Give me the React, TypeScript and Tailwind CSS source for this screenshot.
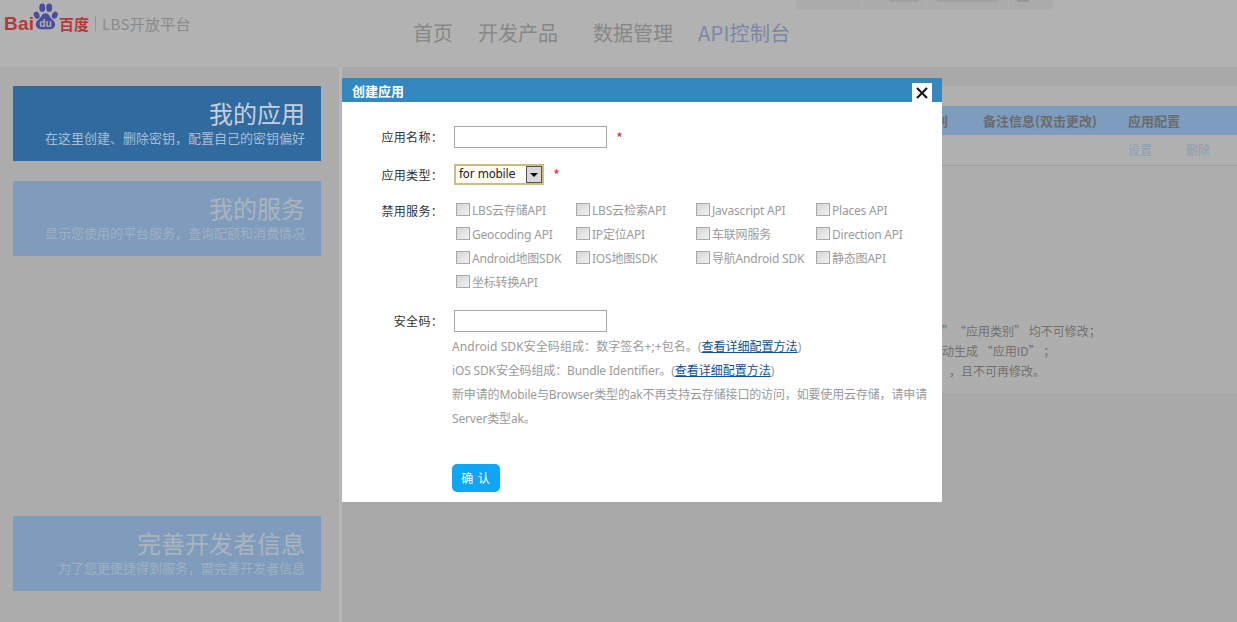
const cjk = "font-['Noto_Sans','Noto_Sans_CJK_SC',sans-serif]";

const services = [
  "LBS云存储API", "LBS云检索API", "Javascript API", "Places API",
  "Geocoding API", "IP定位API", "车联网服务", "Direction API",
  "Android地图SDK", "IOS地图SDK", "导航Android SDK", "静态图API",
  "坐标转换API",
];

function SideCard({ title, sub, active, className = "" }: { title: string; sub: string; active?: boolean; className?: string }) {
  return (
    <div className={`h-[75px] w-[308px] flex flex-col items-end pr-4 pt-[11px] ${active ? "bg-[#316a9f]" : "bg-[#7f9cbc]"} ${className}`}>
      <div className={`text-[24px] leading-[32px] ${active ? "text-[#c6d0dc]" : "text-[#abb4be]"}`}>{title}</div>
      <div className={`text-[13px] leading-[18px] ${active ? "text-[#a9bdd2]" : "text-[#9fb0c3]"}`}>{sub}</div>
    </div>
  );
}

function Logo() {
  return (
    <div className="flex items-center h-[46px] pl-[4px] w-[400px]">
      <span className="w-[28px] text-[#b43a3a] font-bold text-[19px] leading-none font-['Liberation_Sans',sans-serif] tracking-[0.2px]">Bai</span>
      <svg width="27" height="28" viewBox="0 0 29 30" className="mb-[12px] shrink-0" preserveAspectRatio="none">
        <g fill="#4b4ba0">
          <ellipse cx="5" cy="13" rx="3" ry="4" transform="rotate(-20 5 13)" />
          <ellipse cx="11" cy="5" rx="3.200" ry="4.500" />
          <ellipse cx="18.500" cy="5" rx="3.200" ry="4.500" />
          <ellipse cx="24.500" cy="13" rx="3" ry="4" transform="rotate(20 24.500 13)" />
          <path d="M14.500 11c-3.500 0-4.500 4-7 6.500-3 2.500-4 5-3 7.500 1.500 3.500 6 3.500 10 3 4 .5 8.500.5 10-3 1-2.500 0-5-3-7.500-2.500-2.500-3.500-6.500-7-6.500z" />
        </g>
        <text x="14.500" y="26" textAnchor="middle" fontSize="11" fontWeight="700" fill="#b0b0b0" fontFamily="Liberation Sans">du</text>
      </svg>
      <span className="w-[31px] text-[#b43a3a] font-bold text-[15px] leading-none">百度</span>
      <span className="h-[15px] w-px bg-[#949494] ml-[5px] mr-[6px]" />
      <span className="text-[#8a8a8a] text-[15px] leading-none tracking-[0.3px]">LBS开放平台</span>
    </div>
  );
}

function Header() {
  return (
    <header className="relative h-[67px] bg-[#b2b2b2] flex items-start">
      <div className="absolute left-[796px] top-0 h-[10px] w-[257px] bg-[#ababab] flex">
        <span className="w-[66px] border-r border-[#b1b1b1]" />
        <span className="w-[65px] border-r border-[#b1b1b1] pl-[28px]"><span className="block w-[28px] h-[2px] bg-[#a0a0a0]" /></span>
        <span className="w-[82px] border-r border-[#b1b1b1] pl-[10px]"><span className="block w-[60px] h-[2px] bg-[#a0a0a0]" /></span>
        <span className="pl-[8px]"><span className="block w-[12px] h-[2px] bg-[#989898]" /></span>
      </div>
      <div className="w-[413px] shrink-0"><Logo /></div>
      <nav className="flex items-center text-[20px] leading-[28px] text-[#878787] pt-[19px]">
        <span className="mr-[25px]">首页</span>
        <span className="mr-[35px]">开发产品</span>
        <span className="mr-[25px]">数据管理</span>
        <span className="text-[#7b87a5] tracking-[0.3px]">API控制台</span>
      </nav>
    </header>
  );
}

function Main() {
  return (
    <main className="flex-1 min-w-0 flex flex-col h-[555px]">
      <div className="h-[19px] bg-[#a9a9a9] shrink-0" />
      <div className="h-[20px] bg-[#b0b0b0] shrink-0" />
      <div className="h-[29px] bg-[#7e9cbd] shrink-0 flex items-center text-[13px] font-bold text-[#6b6b6b] pl-[551px] whitespace-nowrap">
        <span className="w-[55px] mr-[35px] text-right">应用类别</span>
        <span className="w-[145px]">备注信息(双击更改)</span>
        <span>应用配置</span>
      </div>
      <div className="h-[31px] bg-[#b0b0b0] border-b border-[#9d9d9d] shrink-0 flex items-center text-[12px] text-[#8b9fb6] pl-[786px]">
        <span className="w-[58px]">设置</span>
        <span>删除</span>
      </div>
      <div className="h-[227px] bg-[#aeaeae] shrink-0 pt-[155px] pl-[600px] text-[12px] leading-[20px] text-[#707070] whitespace-nowrap">
        <div><span className="mr-[6px]">”</span>“应用类别” 均不可修改；</div>
        <div>动生成 “应用ID” ；</div>
        <div className="ml-[7px]">，且不可再修改。</div>
      </div>
      <div className="flex-1 bg-[#a8a8a8]" />
    </main>
  );
}

function Modal() {
  return (
    <section className="absolute left-[342px] top-[78px] w-[600px] h-[424px] bg-white flex flex-col">
      <div className="h-[24px] bg-[#3587c0] flex items-center pl-[10px] relative shrink-0">
        <span className="text-white text-[13px] font-bold leading-none">创建应用</span>
        <button className="absolute right-[10px] bottom-0 w-[20px] h-[19px] bg-white flex items-center justify-center">
          <svg width="12" height="12" viewBox="0 0 12 12"><path d="M1 1l10 10M11 1L1 11" stroke="#1a1a1a" strokeWidth="2.200" /></svg>
        </button>
      </div>
      <div className="pt-[24px] text-[12px] text-[#333]">
        <div className="flex items-center h-[22px]">
          <label className="w-[101px] text-right tracking-[0.3px]">应用名称：</label>
          <input className="ml-[11px] w-[153px] h-[22px] border border-[#a5a5a5] bg-white" />
          <span className="ml-[9px] text-[#d8364f] text-[15px] leading-none">*</span>
        </div>
        <div className="flex items-center h-[21px] mt-[16px]">
          <label className="w-[101px] text-right tracking-[0.3px]">应用类型：</label>
          <div className="ml-[11px] w-[90px] h-[21px] border-2 border-[#cdbb84] bg-[#fffdf6] flex items-center justify-between pl-[3px]">
            <span className="text-[11.500px] text-[#222] font-['DejaVu_Sans',sans-serif] tracking-[-0.2px]">for mobile</span>
            <span className="w-[16px] h-[17px] border border-[#555] bg-[#d8d8d8] flex items-center justify-center">
              <span className="w-0 h-0 border-x-[4px] border-x-transparent border-t-[4px] border-t-black" />
            </span>
          </div>
          <span className="ml-[9px] text-[#d8364f] text-[15px] leading-none">*</span>
        </div>
        <div className="flex mt-[14px]">
          <label className="w-[101px] text-right leading-[24px] tracking-[0.3px]">禁用服务：</label>
          <div className="ml-[13px] grid grid-cols-[120px_120px_120px_120px] auto-rows-[24px]">
            {services.map((s) => (
              <div key={s} className={`flex items-center text-[#9b9b9b] whitespace-nowrap tracking-[-0.2px] ${cjk}`}>
                <input type="checkbox" disabled className="appearance-none w-[14px] h-[13px] border border-[#a8a8a8] bg-gradient-to-br from-[#d4d4d4] to-[#f2f2f2] mr-[2px] mb-[3px] shrink-0" />
                <span>{s}</span>
              </div>
            ))}
          </div>
        </div>
        <div className="flex items-center h-[22px] mt-[15px]">
          <label className="w-[101px] text-right tracking-[0.3px]">安全码：</label>
          <input className="ml-[11px] w-[153px] h-[22px] border border-[#a5a5a5] bg-white" />
        </div>
        <div className={`ml-[110px] mt-[3px] w-[480px] leading-[24px] text-[#9a9a9a] ${cjk}`}>
          <div className="tracking-[0.08px]">Android SDK安全码组成：数字签名+;+包名。(<a className="text-[#0b5394] underline tracking-[0px]">查看详细配置方法</a>)</div>
          <div className="tracking-[-0.15px]">iOS SDK安全码组成：Bundle Identifier。(<a className="text-[#0b5394] underline tracking-[0px]">查看详细配置方法</a>)</div>
          <div className="tracking-[-0.15px]">新申请的Mobile与Browser类型的ak不再支持云存储接口的访问，如要使用云存储，请申请Server类型ak。</div>
        </div>
        <button className="block ml-[110px] mt-[33px] w-[48px] h-[28px] rounded-[5px] bg-[#0fa6f5] text-white text-[12px] tracking-[1px]">确 认</button>
      </div>
    </section>
  );
}

export default function App() {
  return (
    <div className="relative w-full h-[622px] overflow-hidden bg-[#ababab] font-['Noto_Sans_CJK_SC','Liberation_Sans',sans-serif]">
      <Header />
      <div className="flex">
        <aside className="w-[339px] shrink-0 h-[555px] bg-[#acacac] pl-[13px] pt-[19px] flex flex-col gap-5">
          <SideCard active title="我的应用" sub="在这里创建、删除密钥，配置自己的密钥偏好" />
          <SideCard title="我的服务" sub="显示您使用的平台服务，查询配额和消费情况" />
          <SideCard className="mt-[240px]" title="完善开发者信息" sub="为了您更便捷得到服务，需完善开发者信息" />
        </aside>
        <div className="w-[3px] shrink-0 bg-[#b6b6b6]" />
        <Main />
      </div>
      <Modal />
    </div>
  );
}
